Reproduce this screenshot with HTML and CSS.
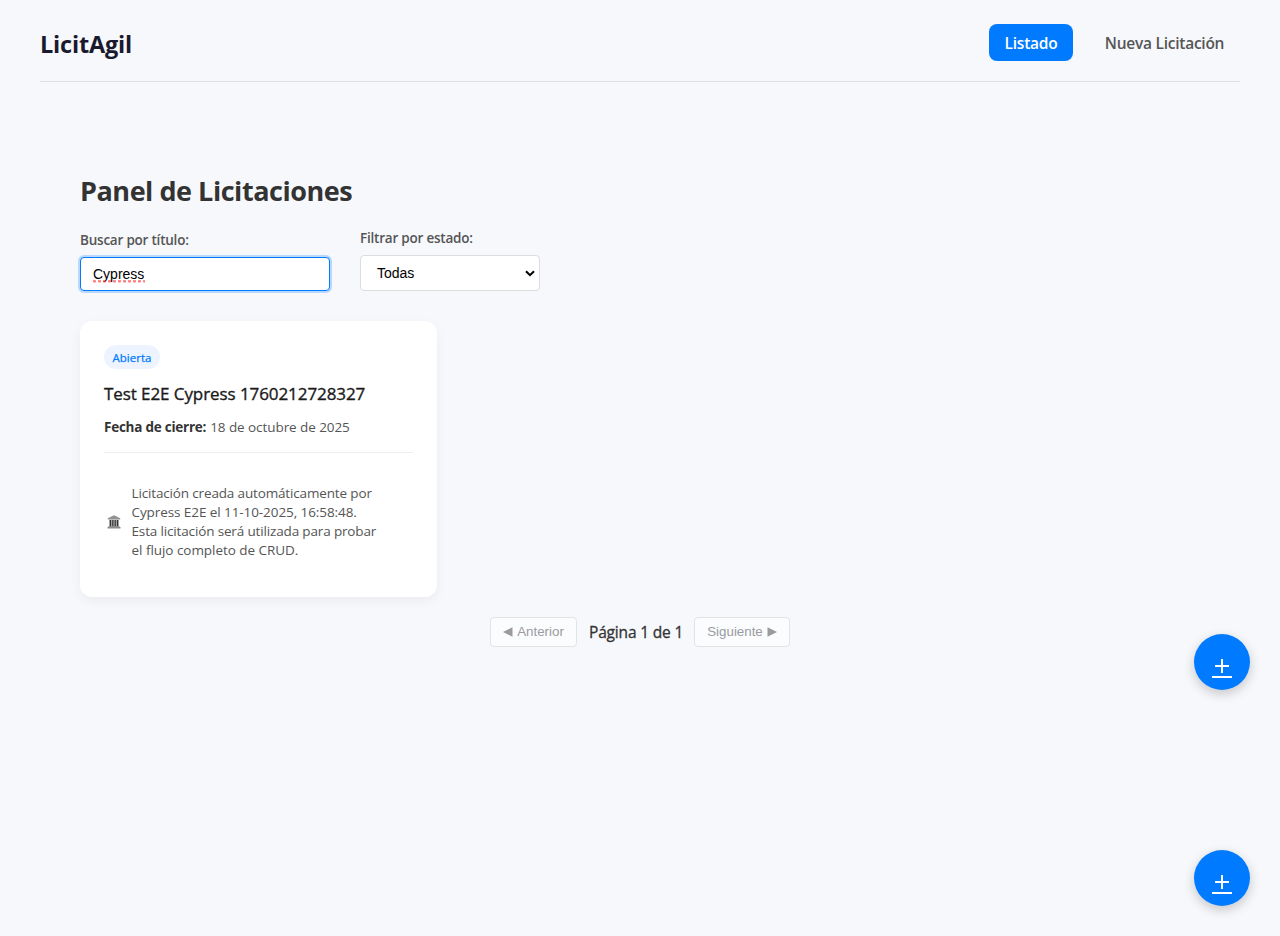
FILE: index.html
```html
<!DOCTYPE html>
<html lang="es">
<head>
<meta charset="utf-8">
<title>LicitAgil</title>
<link rel="stylesheet" href="styles.css">
</head>
<body>
<header class="header">
  <div class="brand">LicitAgil</div>
  <nav class="nav">
    <a class="nav-link active"><span>Listado</span></a>
    <a class="nav-link"><span>Nueva Licitación</span></a>
  </nav>
</header>
<main class="main">
  <h1 class="title">Panel de Licitaciones</h1>
  <div class="filters">
    <div class="field">
      <label class="label">Buscar por título:</label>
      <div class="input"><span class="typed">Cypress<svg class="squiggle" width="52" height="3" viewBox="0 0 52 3"><path d="M0 1H52" stroke="#f22" stroke-width="1" stroke-dasharray="3 2"/><path d="M.5 2H52" stroke="#f66" stroke-width="1" stroke-dasharray="2 3"/></svg></span></div>
    </div>
    <div class="field">
      <label class="label">Filtrar por estado:</label>
      <div class="select"><span>Todas</span><svg width="10" height="7" viewBox="0 0 10 7"><path d="M1 1.2L5 5.2L9 1.2" fill="none" stroke="#000" stroke-width="2"/></svg></div>
    </div>
  </div>
  <article class="card">
    <span class="badge">Abierta</span>
    <h2 class="card-title">Test E2E Cypress 1760212728327</h2>
    <p class="date"><strong>Fecha de cierre:</strong> <span>18 de octubre de 2025</span></p>
    <div class="desc">
      <svg class="bank" width="14" height="14" viewBox="0 0 14 14"><path d="M7 .3L13.2 3.2V4.6H.8V3.2Z" fill="#929292"/><path d="M2 4.6H12V11H2Z" fill="#b0b0b0"/><path d="M3.5 5V11M5.8 5V11M8.2 5V11M10.5 5V11" stroke="#333" stroke-width="1.2"/><path d="M1.5 11H12.5V12H13.5V13.4H.5V12H1.5Z" fill="#8c8c8c"/></svg>
      <p class="desc-text"><span class="tight">Licitación creada automáticamente por</span><br><span class="snug">Cypress E2E el 11-10-2025, 16:58:48.</span><br><span class="tight">Esta licitación será utilizada para probar</span><br><span>el flujo completo de CRUD.</span></p>
    </div>
  </article>
  <div class="pager">
    <div class="page-btn prev"><svg width="10" height="10" viewBox="0 0 10 10"><path d="M0 5L9.5 .3V9.7Z" fill="#999b9e"/></svg><span>Anterior</span></div>
    <span class="page-info">Página 1 de 1</span>
    <div class="page-btn next"><span>Siguiente</span><svg width="10" height="10" viewBox="0 0 10 10"><path d="M10 5L.5 .3V9.7Z" fill="#999b9e"/></svg></div>
  </div>
</main>
<a class="fab fab-upper"><svg width="20" height="20" viewBox="0 0 20 20"><path d="M3 8H17M10 1V15M0 19H20" stroke="#fff" stroke-width="2"/></svg></a>
<a class="fab fab-lower"><svg width="20" height="20" viewBox="0 0 20 20"><path d="M3 8H17M10 1V15M0 19H20" stroke="#fff" stroke-width="2"/></svg></a>
</body>
</html>
```
FILE: styles.css
```css
* { box-sizing: border-box; }
body {
  margin: 0;
  min-height: 936px;
  background: #f7f8fc;
  color: #333;
  font-family: "Open Sans", "Noto Sans", sans-serif;
}
h1, h2, p { margin: 0; }
.header {
  display: flex;
  justify-content: space-between;
  align-items: flex-start;
  height: 82px;
  margin: 0 40px;
  padding-top: 24px;
  border-bottom: 1px solid #dee0e5;
}
.brand { font-size: 23.5px; font-weight: 700; line-height: 40px; color: #1a1a2e; letter-spacing: -0.2px; white-space: nowrap; }
.nav { display: flex; gap: 16px; }
.nav-link { display: flex; justify-content: center; width: 151px; height: 37px; border-radius: 8px; font-size: 15.5px; font-weight: 600; line-height: 38px; letter-spacing: -0.25px; color: #555; white-space: nowrap; }
.nav-link.active { width: 84px; background: #007bff; color: #fff; }
.main { padding: 89px 80px 0; }
.title { height: 42px; font-size: 27px; font-weight: 700; line-height: 40px; letter-spacing: -0.46px; white-space: nowrap; }
.filters { display: flex; align-items: flex-end; gap: 30px; height: 78px; }
.label { display: block; height: 27px; font-size: 13.5px; font-weight: 600; line-height: 20px; letter-spacing: -0.22px; color: #555; white-space: nowrap; }
.input, .select { font-family: "Liberation Sans", Arial, sans-serif; font-size: 14px; color: #000; background: #fff; border-radius: 4px; }
.input { width: 250px; height: 34px; padding: 0 12px; line-height: 32px; border: 1px solid #007bff; box-shadow: 0 0 0 2px #b8d9fd; }
.typed { position: relative; }
.squiggle { position: absolute; left: 0; top: 14px; }
.select { display: flex; align-items: center; justify-content: space-between; width: 180px; height: 36px; padding: 0 4px 0 16px; border: 1px solid #ddd; }
.card { width: 357px; height: 276px; margin-top: 30px; padding: 24px; background: #fff; border-radius: 12px; box-shadow: 0 4px 12px rgba(0, 0, 0, .05); }
.badge { display: flex; justify-content: center; width: 56px; height: 24px; border-radius: 12px; background: #eef4ff; color: #007bff; font-size: 11.5px; font-weight: 500; line-height: 25px; -webkit-text-stroke: .25px; }
.card-title { margin-top: 12px; font-size: 17px; font-weight: 500; line-height: 25px; letter-spacing: -0.08px; color: #1a1a1a; white-space: nowrap; -webkit-text-stroke: .35px; }
.date { display: flex; gap: 4px; height: 47px; padding-top: 11px; border-bottom: 1px solid #eee; font-size: 13.5px; line-height: 20px; letter-spacing: -0.07px; color: #555; white-space: nowrap; }
.date strong { color: #333; letter-spacing: -0.24px; }
.desc { display: flex; align-items: center; padding: 31px 0 0 2.5px; }
.bank { flex: none; margin-right: 11px; }
.desc-text { font-size: 13.5px; line-height: 19px; color: #555; white-space: nowrap; letter-spacing: -0.04px; }
.tight { letter-spacing: -0.15px; }
.snug { letter-spacing: -0.08px; }
.pager { display: flex; justify-content: center; align-items: center; gap: 12px; margin-top: 20px; }
.page-btn { display: flex; align-items: center; justify-content: center; gap: 4px; height: 30px; padding-bottom: 1px; border: 1px solid #e2e3e5; border-radius: 4px; background: #fbfcfe; color: #999b9e; font: 13.33px "Liberation Sans", Arial, sans-serif; }
.prev { width: 87px; }
.next { width: 96px; }
.page-info { width: 93px; font-size: 15.5px; font-weight: 500; line-height: 30px; letter-spacing: -0.17px; white-space: nowrap; -webkit-text-stroke: .3px; }
.fab { position: fixed; right: 30px; display: flex; justify-content: center; width: 56px; height: 56px; padding-top: 24px; border-radius: 50%; background: #007bff; box-shadow: 0 4px 12px rgba(0, 0, 0, .2); }
.fab-upper { top: 634px; }
.fab-lower { bottom: 30px; }
```
